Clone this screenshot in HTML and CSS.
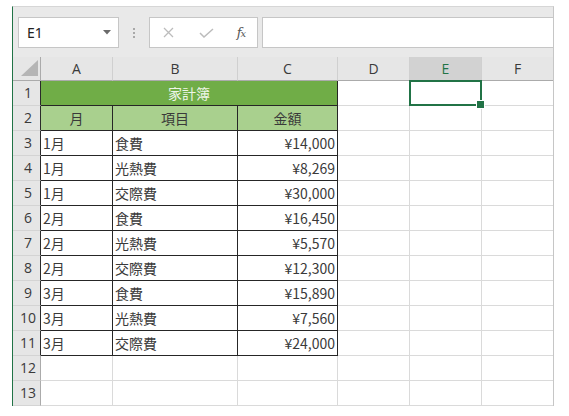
FILE: index.html
```html
<!DOCTYPE html>
<html lang="ja">
<head>
<meta charset="utf-8">
<title>家計簿</title>
<link rel="stylesheet" href="styles.css">
</head>
<body>
<div class="app">
  <div class="toolbar">
    <div class="namebox">
      <span>E1</span>
      <svg class="arrow" width="8" height="5" viewBox="0 0 8 5"><path d="M0 0H8L4 4.5Z" fill="#6a6a6a"/></svg>
    </div>
    <div class="grip"><i></i><i></i><i></i></div>
    <div class="fxbtns">
      <span class="b1"><svg width="11" height="11" viewBox="0 0 11 11"><path d="M1 1L10 10M10 1L1 10" stroke="#bcbcbc" stroke-width="1.3" fill="none"/></svg></span>
      <span class="b2"><svg width="15" height="10" viewBox="0 0 15 10"><path d="M1 5L5 9L14 1" stroke="#bcbcbc" stroke-width="1.5" fill="none"/></svg></span>
      <span class="b3"><i class="fx">f<small>x</small></i></span>
    </div>
    <div class="formula"></div>
  </div>
  <div class="sheet">
    <div class="corner"><svg width="17" height="16" viewBox="0 0 17 16"><path d="M17 0V16H0Z" fill="#b5b5b5"/></svg></div>
    <div class="ch">A</div><div class="ch">B</div><div class="ch">C</div><div class="ch">D</div><div class="ch sel">E</div><div class="ch last">F</div>

    <div class="rh in">1</div><div class="cell t title">家計簿</div><div class="cell"></div><div class="cell sel-cell"></div><div class="cell last"></div>

    <div class="rh in">2</div><div class="cell t hd ctr">月</div><div class="cell t hd ctr">項目</div><div class="cell t hd ctr">金額</div><div class="cell"></div><div class="cell"></div><div class="cell last"></div>

    <div class="rh in">3</div><div class="cell t">1月</div><div class="cell t">食費</div><div class="cell t num">¥14,000</div><div class="cell"></div><div class="cell"></div><div class="cell last"></div>
    <div class="rh in">4</div><div class="cell t">1月</div><div class="cell t">光熱費</div><div class="cell t num">¥8,269</div><div class="cell"></div><div class="cell"></div><div class="cell last"></div>
    <div class="rh in">5</div><div class="cell t">1月</div><div class="cell t">交際費</div><div class="cell t num">¥30,000</div><div class="cell"></div><div class="cell"></div><div class="cell last"></div>
    <div class="rh in">6</div><div class="cell t">2月</div><div class="cell t">食費</div><div class="cell t num">¥16,450</div><div class="cell"></div><div class="cell"></div><div class="cell last"></div>
    <div class="rh in">7</div><div class="cell t">2月</div><div class="cell t">光熱費</div><div class="cell t num">¥5,570</div><div class="cell"></div><div class="cell"></div><div class="cell last"></div>
    <div class="rh in">8</div><div class="cell t">2月</div><div class="cell t">交際費</div><div class="cell t num">¥12,300</div><div class="cell"></div><div class="cell"></div><div class="cell last"></div>
    <div class="rh in">9</div><div class="cell t">3月</div><div class="cell t">食費</div><div class="cell t num">¥15,890</div><div class="cell"></div><div class="cell"></div><div class="cell last"></div>
    <div class="rh in">10</div><div class="cell t">3月</div><div class="cell t">光熱費</div><div class="cell t num">¥7,560</div><div class="cell"></div><div class="cell"></div><div class="cell last"></div>
    <div class="rh in">11</div><div class="cell t">3月</div><div class="cell t">交際費</div><div class="cell t num">¥24,000</div><div class="cell"></div><div class="cell"></div><div class="cell last"></div>

    <div class="rh">12</div><div class="cell"></div><div class="cell"></div><div class="cell"></div><div class="cell"></div><div class="cell"></div><div class="cell last"></div>
    <div class="rh">13</div><div class="cell"></div><div class="cell"></div><div class="cell"></div><div class="cell"></div><div class="cell"></div><div class="cell last"></div>
  </div>
</div>
</body>
</html>
```

FILE: styles.css
```css
* { box-sizing: border-box; }

body {
  margin: 0;
  background: #ffffff;
  font-family: "Noto Sans CJK JP", "Noto Sans", sans-serif;
}

.app {
  margin: 6px 0 0 12px;
  width: 542px;
  border-left: 1px solid #217346;
  border-right: 1px solid #c6c6c6;
  border-top: 1px solid #d6d6d6;
}

/* toolbar */
.toolbar {
  display: flex;
  height: 50px;
  padding-top: 10px;
  background: #e9e9e9;
}

.namebox {
  margin-left: 5px;
  width: 101px;
  height: 31px;
  background: #fff;
  border: 1px solid #c6c6c6;
  display: flex;
  align-items: center;
  justify-content: space-between;
  padding: 0 7px 0 8px;
  font: 14px "Noto Sans", sans-serif;
  color: #222;
}

.arrow { display: block; }

.grip {
  width: 30px;
  height: 31px;
  display: flex;
  flex-direction: column;
  align-items: center;
  justify-content: center;
  gap: 2px;
}

.grip i {
  display: block;
  width: 2px;
  height: 2px;
  background: #a8a8a8;
}

.fxbtns {
  width: 109px;
  height: 31px;
  background: #fff;
  border: 1px solid #c6c6c6;
  display: flex;
  align-items: center;
}

.fxbtns span {
  display: flex;
  align-items: center;
  justify-content: center;
  height: 100%;
}

.fxbtns svg { display: block; }

.b1 { width: 37px; }
.b2 { width: 38px; }
.b3 { width: 32px; }

.fx {
  font-family: "DejaVu Serif", "Liberation Serif", serif;
  font-style: italic;
  font-size: 13px;
  color: #555;
  letter-spacing: -1px;
}

.fx small {
  font-size: 10px;
}

.formula {
  margin-left: 4px;
  flex: 1;
  height: 31px;
  background: #fff;
  border: 1px solid #c6c6c6;
  border-right: none;
}

/* sheet */
.sheet {
  display: grid;
  grid-template-columns: 28px 72px 125px 100px 72px 72px 71px;
  grid-template-rows: 24px;
  grid-auto-rows: 25px;
}

.corner {
  background: #e6e6e6;
  border-right: 1px solid #ababab;
  border-bottom: 1px solid #ababab;
  display: flex;
  align-items: flex-end;
  justify-content: flex-end;
  padding: 0 2px 4px 0;
}

.corner svg { display: block; }

.ch {
  background: #e6e6e6;
  border-right: 1px solid #d0d0d0;
  border-bottom: 1px solid #ababab;
  font: 14px "Open Sans", sans-serif;
  color: #3a3a3a;
  text-align: center;
  line-height: 23px;
}

.ch.sel {
  background: #d2d2d2;
  color: #217346;
}

.ch.last { border-right: none; }

.rh {
  background: #e6e6e6;
  border-right: 1px solid #ababab;
  border-bottom: 1px solid #d4d4d4;
  font: 14px "Open Sans", sans-serif;
  color: #3a3a3a;
  text-align: center;
  line-height: 24px;
  padding-left: 3px;
}

.rh.in { border-right-color: #2a2a2a; }

.cell {
  border-right: 1px solid #dadada;
  border-bottom: 1px solid #dadada;
  font-size: 14px;
  line-height: 24px;
  color: #3a3a3a;
  padding: 0 2px;
  white-space: nowrap;
  overflow: hidden;
}

.cell.last { border-right: none; }

.cell.t {
  border-right-color: #262626;
  border-bottom-color: #262626;
}

.title {
  grid-column: span 3;
  background: #70ad47;
  color: #eef5e8;
  text-align: center;
}

.hd {
  background: #a9d08e;
}

.ctr { text-align: center; }
.num { text-align: right; }

.sel-cell {
  position: relative;
  overflow: visible;
}

.sel-cell::before {
  content: "";
  position: absolute;
  top: -1px;
  left: -1px;
  right: -1px;
  bottom: -1px;
  border: 2px solid #217346;
}

.sel-cell::after {
  content: "";
  position: absolute;
  right: -4px;
  bottom: -4px;
  width: 7px;
  height: 7px;
  background: #217346;
  border: 1px solid #fff;
}
```
